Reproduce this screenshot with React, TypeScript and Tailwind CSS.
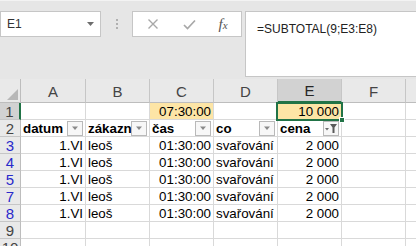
import React from "react";

const cellFont = { fontFamily: '"Liberation Sans", Arial, sans-serif' };

const colW = ["w-[65px]", "w-[64px]", "w-[64px]", "w-[64px]", "w-[64px]", "w-[64px]"];

function FilterBtn({ active }: { active?: boolean }) {
  return (
    <div className="absolute right-[2px] top-[1px] w-[16px] h-[15px] bg-[#f7f7f7] border border-[#b9b9b9] flex items-center justify-center">
      {active ? (
        <svg width="14" height="13" viewBox="0 0 14 13">
          <polygon points="1,6 5,6 3,8.5" fill="#6b6b6b" />
          <polygon points="6,2 13,2 10.5,5.5 10.5,11 8.5,11 8.5,5.5" fill="#5a5a5a" />
        </svg>
      ) : (
        <svg width="8" height="5" viewBox="0 0 8 5">
          <polygon points="1,0.5 7,0.5 4,4" fill="#8a8a8a" />
        </svg>
      )}
    </div>
  );
}

type C = { t?: string; r?: boolean; b?: boolean; fill?: boolean; f?: boolean; fa?: boolean };

function Row({ num, blue, cells, selRow }: { num: string; blue?: boolean; cells: C[]; selRow?: boolean }) {
  return (
    <div className="flex h-[17px]">
      <div
        className={`w-[21px] shrink-0 h-full border-b border-[#c6c6c6] ${selRow ? "bg-[#d2d2d2] border-r-2 border-r-[#217346]" : "bg-[#e9e9e9] border-r border-r-[#bdbdbd]"} flex items-center justify-center text-[15px] leading-none ${blue ? "text-[#2a2acb]" : "text-[#444]"}`}
        style={cellFont}
      >
        {num}
      </div>
      {cells.map((c, i) => (
        <div
          key={i}
          className={`${colW[i]} shrink-0 h-full relative border-r border-b border-[#d9d9d9] ${c.fill ? "bg-[#fde5a6]" : "bg-white"} ${c.r ? "text-right pr-[2px]" : "pl-[2px]"} ${c.b ? "font-bold" : ""} text-[13.33px] leading-[17px] text-black whitespace-nowrap overflow-hidden`}
          style={cellFont}
        >
          {c.t}
          {(c.f || c.fa) && <FilterBtn active={c.fa} />}
        </div>
      ))}
      <div className="flex-1 h-full border-b border-[#d9d9d9] bg-white" />
    </div>
  );
}

export default function App() {
  const data: C[] = [
    { t: "1.VI", r: true },
    { t: "leoš" },
    { t: "01:30:00", r: true },
    { t: "svařování" },
    { t: "2 000", r: true },
    {},
  ];
  return (
    <div className="w-[416px] h-[246px] overflow-hidden bg-white relative" style={cellFont}>
      {/* formula bar area */}
      <div className="h-[79px] bg-[#e6e6e6] border-t border-[#f3f3f3] flex items-start pt-[10px]">
        <div className="w-[101px] h-[26px] bg-white border border-[#c6c6c6] flex items-center pl-[6px] pr-[6px] shrink-0">
          <span className="text-[12px] text-[#333] flex-1">E1</span>
          <svg width="7" height="4" viewBox="0 0 7 4">
            <polygon points="0,0 7,0 3.5,4" fill="#6d6d6d" />
          </svg>
        </div>
        <div className="w-[31px] h-[26px] flex flex-col items-center justify-center gap-[2px] shrink-0">
          <div className="w-[2px] h-[2px] bg-[#b0b0b0]" />
          <div className="w-[2px] h-[2px] bg-[#b0b0b0]" />
          <div className="w-[2px] h-[2px] bg-[#b0b0b0]" />
        </div>
        <div className="w-[110px] h-[26px] bg-white border border-[#c6c6c6] flex items-center shrink-0">
          <div className="w-[38px] flex justify-center pl-[2px]">
            <svg width="12" height="12" viewBox="0 0 12 12">
              <path d="M1.5 1.5 L10.5 10.5 M10.5 1.5 L1.5 10.5" stroke="#a8a8a8" strokeWidth="1.4" fill="none" />
            </svg>
          </div>
          <div className="w-[36px] flex justify-center">
            <svg width="13" height="11" viewBox="0 0 13 11">
              <path d="M1 6 L4.5 9.5 L12 1.5" stroke="#a8a8a8" strokeWidth="1.7" fill="none" />
            </svg>
          </div>
          <div className="flex-1 flex justify-center pr-[2px]">
            <span className="italic text-[#555] text-[15px] leading-none" style={{ fontFamily: '"Liberation Serif", "Times New Roman", serif' }}>
              f<span className="text-[11px]">x</span>
            </span>
          </div>
        </div>
        <div className="w-[3px] shrink-0" />
        <div className="flex-1 h-[66px] bg-white border border-r-0 border-[#c6c6c6] pl-[11px] pt-[4px]">
          <span className="text-[12px] text-[#222]">=SUBTOTAL(9;E3:E8)</span>
        </div>
      </div>
      {/* column headers */}
      <div className="flex h-[24px] bg-[#e9e9e9]">
        <div className="w-[21px] shrink-0 h-full border-r border-b border-[#bdbdbd] relative">
          <svg className="absolute right-[2px] bottom-[2px]" width="11" height="11" viewBox="0 0 11 11">
            <polygon points="11,0 11,11 0,11" fill="#b7b7b7" />
          </svg>
        </div>
        {["A", "B", "C", "D", "E", "F"].map((l, i) => (
          <div
            key={l}
            className={`${colW[i]} shrink-0 h-full border-r border-[#c6c6c6] flex items-center justify-center text-[15px] text-[#444] ${l === "E" ? "bg-[#d2d2d2] border-b-2 border-b-[#217346] text-[#262626]" : "border-b border-b-[#bdbdbd]"}`}
          >
            <span className="pt-[3px]">{l}</span>
          </div>
        ))}
        <div className="flex-1 h-full border-b border-[#bdbdbd]" />
      </div>
      <div className="relative">
        <Row
          num="1"
          selRow
          cells={[{}, {}, { t: "07:30:00", r: true, fill: true }, {}, { t: "10 000", r: true, fill: true }, {}]}
        />
        <Row
          num="2"
          cells={[
            { t: "datum", b: true, f: true },
            { t: "zákazn", b: true, f: true },
            { t: "čas", b: true, f: true },
            { t: "co", b: true, f: true },
            { t: "cena", b: true, fa: true },
            {},
          ]}
        />
        <Row num="3" blue cells={data} />
        <Row num="4" blue cells={data} />
        <Row num="5" blue cells={data} />
        <Row num="7" blue cells={data} />
        <Row num="8" blue cells={data} />
        <Row num="9" cells={[{}, {}, {}, {}, {}, {}]} />
        <Row num="10" cells={[{}, {}, {}, {}, {}, {}]} />
        {/* selection box over E1 */}
        <div className="absolute left-[276px] top-[-1px] w-[67px] h-[19px] border-2 border-[#217346] pointer-events-none">
          <div className="absolute right-[-4px] bottom-[-4px] w-[6px] h-[6px] bg-[#217346] border border-white" />
        </div>
      </div>
    </div>
  );
}
